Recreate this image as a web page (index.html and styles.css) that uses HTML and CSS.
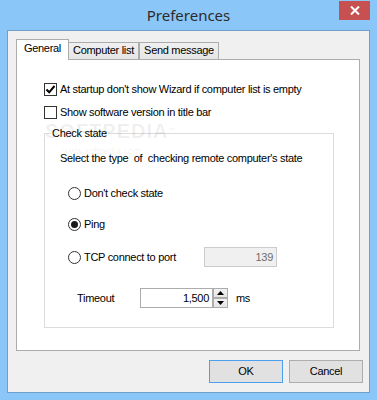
FILE: index.html
```html
<!DOCTYPE html>
<html>
<head>
<meta charset="utf-8">
<link rel="stylesheet" href="styles.css">
</head>
<body>
<div class="window">
  <div class="titlebar">
    <span class="spacer"></span>
    <div class="title">Preferences</div>
    <div class="close"><svg width="10" height="9" viewBox="0 0 10 9"><path d="M1 0.5 L9 8.5 M9 0.5 L1 8.5" stroke="#fff" stroke-width="2" fill="none"/></svg></div>
  </div>
  <div class="client">
    <div class="tabs">
      <div class="tab active tab-general">General</div>
      <div class="tab tab-list">Computer list</div>
      <div class="tab tab-msg">Send message</div>
    </div>
    <div class="panel">
      <div class="watermark">SOFTPEDIA<span class="tm">™</span></div>
      <div class="watermark-url">www.softpedia.com</div>
      <label class="check"><span class="box"><svg width="11" height="11" viewBox="0 0 11 11"><path d="M1.5 5.5 L4.2 8.3 L9.5 2" stroke="#000" stroke-width="2" fill="none"/></svg></span>At startup don't show Wizard if computer list is empty</label>
      <label class="check second"><span class="box"></span>Show software version in title bar</label>
      <fieldset class="group">
        <legend>Check state</legend>
        <div class="hint">Select the type  of  checking remote computer's state</div>
        <label class="radio r1"><span class="circle"></span>Don't check state</label>
        <label class="radio r2"><span class="circle on"></span>Ping</label>
        <div class="port-row">
          <label class="radio wide"><span class="circle"></span>TCP connect to port</label>
          <div class="field disabled">139</div>
        </div>
        <div class="timeout-row">
          <span class="timeout-label">Timeout</span>
          <div class="field">1,500</div>
          <div class="spin">
            <div class="spin-btn"><svg width="7" height="4" viewBox="0 0 7 4"><path d="M0 4 L3.5 0 L7 4 Z" fill="#000"/></svg></div>
            <div class="spin-btn"><svg width="7" height="4" viewBox="0 0 7 4"><path d="M0 0 L7 0 L3.5 4 Z" fill="#000"/></svg></div>
          </div>
          <span class="unit">ms</span>
        </div>
      </fieldset>
    </div>
    <div class="buttons">
      <div class="btn default">OK</div>
      <div class="btn">Cancel</div>
    </div>
  </div>
</div>
</body>
</html>
```
FILE: styles.css
```css
* { box-sizing: border-box; }
html, body { margin: 0; padding: 0; }
body {
  width: 377px;
  height: 400px;
  overflow: hidden;
  background: #8bc6f8;
  font-family: "Liberation Sans", Arial, sans-serif;
  font-size: 11px;
  letter-spacing: -0.3px;
  color: #000;
}
.window {
  width: 377px;
  height: 400px;
  display: flex;
  flex-direction: column;
}
.titlebar {
  height: 30px;
  display: grid;
  grid-template-columns: 1fr auto 1fr;
}
.title {
  font-family: "Noto Sans", "Open Sans", sans-serif;
  font-size: 15px;
  letter-spacing: 0;
  line-height: 30px;
  color: #2b2b2b;
}
.close {
  justify-self: end;
  align-self: start;
  margin-top: 1px;
  margin-right: 7px;
  width: 31px;
  height: 19px;
  background: #c75050;
  display: flex;
  align-items: center;
  justify-content: center;
}
.client {
  margin: 0 7px 7px 7px;
  height: 363px;
  border: 1px solid #6f9fcd;
  background: #f0f0f0;
  display: flex;
  flex-direction: column;
}
.tabs {
  display: flex;
  align-items: flex-end;
  margin: 8px 0 0 8px;
  height: 20px;
}
.tab {
  height: 17px;
  border: 1px solid #acacac;
  border-bottom: none;
  background: linear-gradient(#f0f0f0, #e5e5e5);
  text-align: center;
  line-height: 15px;
}
.tab.active {
  height: 21px;
  margin-bottom: -1px;
  background: #fff;
  position: relative;
  z-index: 1;
  line-height: 17px;
}
.tab-general { width: 53px; }
.tab-list { width: 71px; margin-left: -1px; }
.tab-msg { width: 80px; }
.panel {
  margin-left: 8px;
  width: 344px;
  height: 292px;
  background: #fff;
  border: 1px solid #acacac;
  padding: 23px 0 0 27px;
  display: flex;
  flex-direction: column;
  position: relative;
}
.watermark {
  position: absolute;
  left: 28px;
  top: 61px;
  font-size: 20px;
  font-weight: bold;
  letter-spacing: 1px;
  line-height: 20px;
  color: rgba(0, 0, 0, 0.07);
  pointer-events: none;
}
.watermark .tm { font-size: 7px; vertical-align: top; }
.watermark-url {
  position: absolute;
  left: 46px;
  top: 86px;
  font-size: 9px;
  line-height: 11px;
  letter-spacing: 0;
  color: rgba(0, 0, 0, 0.08);
}
.check {
  display: flex;
  align-items: center;
  height: 13px;
  gap: 3px;
  line-height: 13px;
  white-space: nowrap;
}
.check.second { margin-top: 10px; }
.box {
  width: 13px;
  height: 13px;
  border: 1px solid #333;
  background: #fff;
  display: flex;
  align-items: center;
  justify-content: center;
}
.group {
  margin: 8px 0 0 0;
  width: 290px;
  height: 201px;
  min-inline-size: 0;
  border: 1px solid #dcdcdc;
  padding: 0 0 0 15px;
}
.group legend {
  padding: 0 1px;
  margin-left: -9px;
  line-height: 13px;
}
.hint {
  margin-top: 12px;
  line-height: 13px;
  height: 13px;
  white-space: pre;
}
.radio {
  display: flex;
  align-items: center;
  gap: 3px;
  height: 13px;
  line-height: 13px;
  white-space: nowrap;
}
.r1 { margin: 22px 0 0 8px; }
.r2 { margin: 18px 0 0 8px; }
.circle {
  width: 13px;
  height: 13px;
  border: 1px solid #333;
  border-radius: 50%;
  background: #fff;
  display: flex;
  align-items: center;
  justify-content: center;
}
.circle.on::after {
  content: "";
  width: 7px;
  height: 7px;
  border-radius: 50%;
  background: #1a1a1a;
}
.port-row {
  display: flex;
  align-items: center;
  height: 20px;
  margin: 16px 0 0 8px;
}
.radio.wide { width: 136px; }
.field {
  width: 73px;
  height: 20px;
  border: 1px solid #acacac;
  background: #fff;
  text-align: right;
  padding-right: 3px;
  line-height: 18px;
}
.field.disabled {
  background: #f0f0f0;
  border-color: #cccccc;
  color: #6d6d6d;
}
.timeout-row {
  display: flex;
  align-items: center;
  height: 20px;
  margin: 21px 0 0 17px;
}
.timeout-label { width: 63px; }
.spin {
  width: 15px;
  height: 20px;
  display: flex;
  flex-direction: column;
}
.spin-btn {
  height: 10px;
  border: 1px solid #acacac;
  background: linear-gradient(#f2f2f2, #e5e5e5);
  display: flex;
  align-items: center;
  justify-content: center;
}
.unit { margin-left: 8px; }
.buttons {
  display: flex;
  justify-content: flex-end;
  gap: 6px;
  padding-right: 6px;
  margin-top: 9px;
}
.btn {
  width: 74px;
  height: 23px;
  border: 1px solid #adadad;
  background: #e1e1e1;
  text-align: center;
  line-height: 21px;
}
.btn.default { border-color: #4aa0ee; }
```
